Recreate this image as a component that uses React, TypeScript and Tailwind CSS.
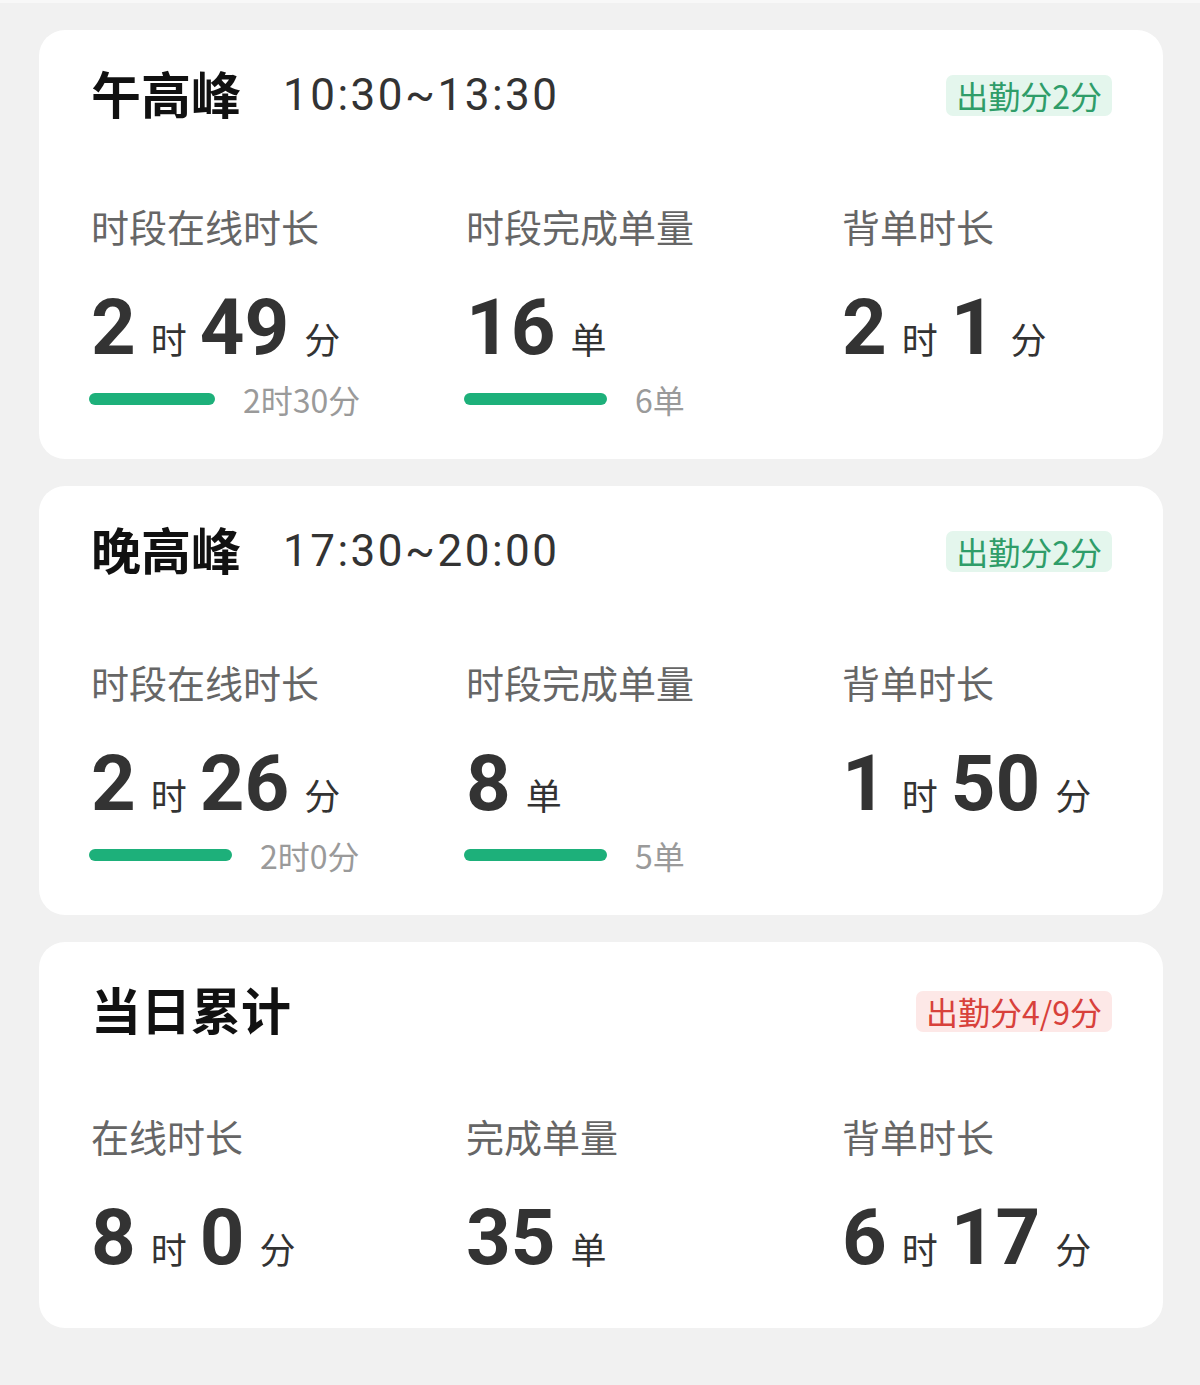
import React from "react";

type Part = { value: string; unit: string };

type Stat = {
  label: string;
  parts: Part[];
  // progress bar under the number, width in px
  bar?: number;
  target?: string;
};

type Period = {
  title: string;
  time?: string;
  badge: string;
  warn?: boolean;
  stats: Stat[];
};

const periods: Period[] = [
  {
    title: "午高峰",
    time: "10:30~13:30",
    badge: "出勤分2分",
    stats: [
      {
        label: "时段在线时长",
        parts: [
          { value: "2", unit: "时" },
          { value: "49", unit: "分" },
        ],
        bar: 126,
        target: "2时30分",
      },
      {
        label: "时段完成单量",
        parts: [{ value: "16", unit: "单" }],
        bar: 143,
        target: "6单",
      },
      {
        label: "背单时长",
        parts: [
          { value: "2", unit: "时" },
          { value: "1", unit: "分" },
        ],
      },
    ],
  },
  {
    title: "晚高峰",
    time: "17:30~20:00",
    badge: "出勤分2分",
    stats: [
      {
        label: "时段在线时长",
        parts: [
          { value: "2", unit: "时" },
          { value: "26", unit: "分" },
        ],
        bar: 143,
        target: "2时0分",
      },
      {
        label: "时段完成单量",
        parts: [{ value: "8", unit: "单" }],
        bar: 143,
        target: "5单",
      },
      {
        label: "背单时长",
        parts: [
          { value: "1", unit: "时" },
          { value: "50", unit: "分" },
        ],
      },
    ],
  },
  {
    title: "当日累计",
    badge: "出勤分4/9分",
    warn: true,
    stats: [
      {
        label: "在线时长",
        parts: [
          { value: "8", unit: "时" },
          { value: "0", unit: "分" },
        ],
      },
      {
        label: "完成单量",
        parts: [{ value: "35", unit: "单" }],
      },
      {
        label: "背单时长",
        parts: [
          { value: "6", unit: "时" },
          { value: "17", unit: "分" },
        ],
      },
    ],
  },
];

const cjk = "font-['Noto_Sans_CJK_SC','Noto_Sans',sans-serif]";
const num = "font-['Roboto','Noto_Sans_CJK_SC',sans-serif]";

const StatBlock = ({ stat, hasBars }: { stat: Stat; hasBars: boolean }) => (
  <div className="flex flex-col">
    <div className={`${cjk} text-[38px] leading-[40px] text-[#666666]`}>
      {stat.label}
    </div>
    <div className="mt-[43px] flex items-baseline h-[78px]">
      {stat.parts.map((p, i) => (
        <React.Fragment key={i}>
          <span
            className={`${num} text-[78px] leading-none font-bold text-[#333333] ${
              i > 0 ? "ml-[13px]" : ""
            }`}
          >
            {p.value}
          </span>
          <span
            className={`${cjk} ml-[15px] text-[36px] leading-none text-[#333333]`}
          >
            {p.unit}
          </span>
        </React.Fragment>
      ))}
    </div>
    {hasBars && (
      <div className="mt-[14px] flex items-center h-[36px]">
        {stat.bar ? (
          <>
            <div
              className="h-[12px] rounded-full bg-[#1db07a] -ml-[2px]"
              style={{ width: stat.bar }}
            />
            <span
              className={`${cjk} ml-[28px] text-[32px] leading-[36px] text-[#9a9a9a]`}
            >
              {stat.target}
            </span>
          </>
        ) : null}
      </div>
    )}
  </div>
);

const PeriodCard = ({ period }: { period: Period }) => {
  const hasBars = period.stats.some((s) => s.bar);
  return (
    <div
      className={`bg-white rounded-[26px] pl-[52px] pr-[51px] ${
        hasBars ? "pt-[40px] pb-[42px]" : "pt-[44px] pb-[51px]"
      }`}
    >
      <div className="flex items-center justify-between h-[50px]">
        <div className="flex items-center">
          <span
            className={`${cjk} mb-[6px] text-[50px] leading-none font-bold text-[#111111]`}
          >
            {period.title}
          </span>
          {period.time && (
            <span
              className={`${num} ml-[42px] text-[44px] leading-none text-[#333333] tracking-[2.5px]`}
            >
              {period.time}
            </span>
          )}
        </div>
        <span
          className={`${cjk} rounded-[7px] px-[10px] h-[41px] flex items-center text-[32px] leading-none ${
            period.warn
              ? "bg-[#fde8e7] text-[#d8413b]"
              : "bg-[#e4f6ed] text-[#2f9d69]"
          }`}
        >
          {period.badge}
        </span>
      </div>
      <div
        className={`grid grid-cols-[375px_376px_1fr] ${
          hasBars ? "mt-[86px]" : "mt-[80px]"
        }`}
      >
        {period.stats.map((s, i) => (
          <StatBlock key={i} stat={s} hasBars={hasBars} />
        ))}
      </div>
    </div>
  );
};

export default function App() {
  return (
    <div className="min-h-[1385px] w-full bg-[#f1f1f1] pt-[30px] pl-[39px] pr-[37px] border-t-[3px] border-[#f8f8f8]">
      <div className="flex flex-col gap-[27px] -mt-[3px]">
        {periods.map((p, i) => (
          <PeriodCard key={i} period={p} />
        ))}
      </div>
    </div>
  );
}
